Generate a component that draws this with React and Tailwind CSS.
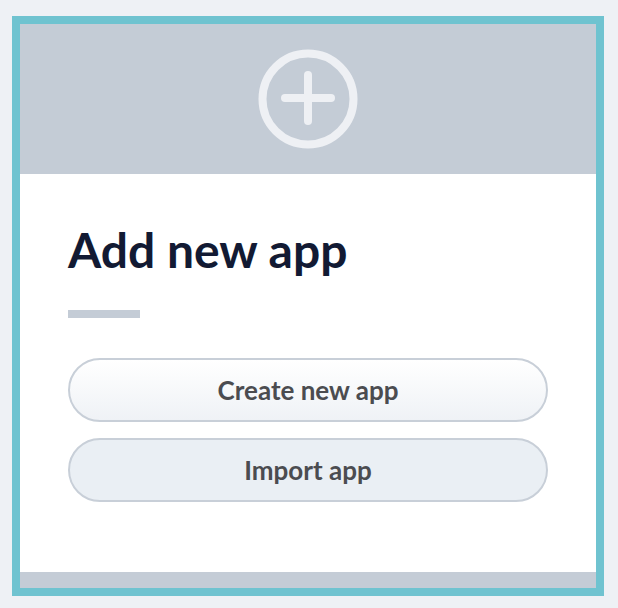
export default function App() {
  return (
    <div className="w-[618px] h-[608px] bg-[#eef1f5] pt-[16px] pl-[12px]" style={{ fontFamily: "Lato, 'Open Sans', sans-serif" }}>
      <div className="w-[592px] h-[580px] border-[8px] border-[#6fc3d0] bg-white flex flex-col">
        <div className="h-[150px] bg-[#c4ccd6] flex items-center justify-center">
          <svg width="100" height="100" viewBox="0 0 100 100" fill="none" stroke="#eef0f4" strokeWidth="8" strokeLinecap="round">
            <circle cx="50" cy="50" r="45.5" />
            <line x1="50" y1="26" x2="50" y2="72" />
            <line x1="27" y1="49" x2="73" y2="49" />
          </svg>
        </div>
        <div className="flex-1 px-[48px] pt-[47px]">
          <h1 className="text-[48px] leading-[58px] font-bold text-[#121a33]">Add new app</h1>
          <div className="mt-[31px] w-[72px] h-[8px] bg-[#c4ccd6]" />
          <div className="mt-[40px] flex flex-col gap-[16px]">
            <button className="h-[64px] rounded-full border-2 border-[#c8cfd8] bg-gradient-to-b from-white to-[#eff2f6] text-[26px] font-bold text-[#4b4c50]">Create new app</button>
            <button className="h-[64px] rounded-full border-2 border-[#c8cfd8] bg-[#eaeff4] text-[26px] font-bold text-[#4b4c50]">Import app</button>
          </div>
        </div>
        <div className="h-[16px] bg-[#c4ccd6]" />
      </div>
    </div>
  );
}
